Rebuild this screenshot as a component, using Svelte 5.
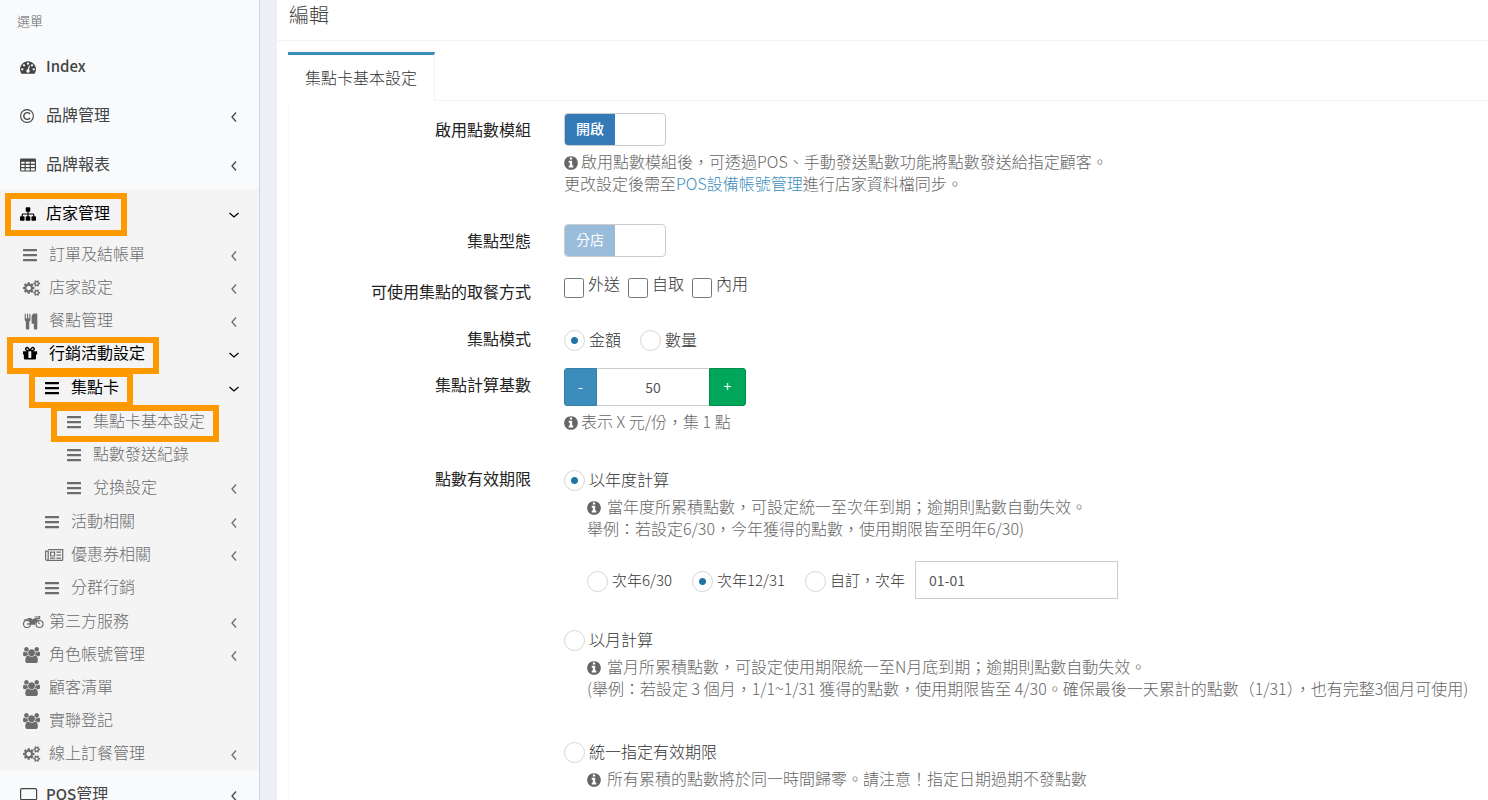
<script>
	const menu = [
		{ icon: 'dashboard', label: 'Index' },
		{ icon: 'copyright', label: '品牌管理', arrow: true },
		{ icon: 'table', label: '品牌報表', arrow: true },
		{
			icon: 'sitemap', label: '店家管理', arrow: true, open: true, marked: true,
			children: [
				{ icon: 'bars', label: '訂單及結帳單', arrow: true },
				{ icon: 'cogs', label: '店家設定', arrow: true },
				{ icon: 'cutlery', label: '餐點管理', arrow: true },
				{
					icon: 'gift', label: '行銷活動設定', arrow: true, open: true, marked: true,
					children: [
						{
							icon: 'bars', label: '集點卡', arrow: true, open: true, marked: true,
							children: [
								{ icon: 'bars', label: '集點卡基本設定', marked: true },
								{ icon: 'bars', label: '點數發送紀錄' },
								{ icon: 'bars', label: '兌換設定', arrow: true }
							]
						},
						{ icon: 'bars', label: '活動相關', arrow: true },
						{ icon: 'newspaper', label: '優惠券相關', arrow: true },
						{ icon: 'bars', label: '分群行銷' }
					]
				},
				{ icon: 'motorcycle', label: '第三方服務', arrow: true },
				{ icon: 'users', label: '角色帳號管理', arrow: true },
				{ icon: 'users', label: '顧客清單' },
				{ icon: 'users', label: '實聯登記' },
				{ icon: 'cogs', label: '線上訂餐管理', arrow: true }
			]
		},
		{ icon: 'desktop', label: 'POS管理', arrow: true }
	];

	const pickups = ['外送', '自取', '內用'];

	let enabled = $state(true);
	let mode = $state('amount');
	let base = $state(50);
	let expiry = $state('year');
	let yearEnd = $state('12/31');
	let customDate = $state('01-01');

	const smallCog = 'v140q0 16-149 31-12 27-30 52 51 113 51 138 0 4-4 7-122 71-124 71-8 0-46-47t-52-68q-20 2-30 2t-30-2q-14 21-52 68t-46 47q-2 0-124-71-4-3-4-7 0-25 51-138-18-25-30-52-149-15-149-31v-140q0-16 149-31 13-29 30-52-51-113-51-138 0-4 4-7 4-2 35-20t59-34 30-16q8 0 46 46.5t52 67.5q20-2 30-2t30 2q51-71 92-112l6-2q4 0 124 70 4 3 4 7 0 25-51 138 17 23 30 52 149 15 149 31z';

	// filled icons, drawn on a 1792 unit em
	const icons = {
		dashboard: 'M384 1152q0-53-37.5-90.5t-90.5-37.5-90.5 37.5-37.5 90.5 37.5 90.5 90.5 37.5 90.5-37.5 37.5-90.5zm192-448q0-53-37.5-90.5t-90.5-37.5-90.5 37.5-37.5 90.5 37.5 90.5 90.5 37.5 90.5-37.5 37.5-90.5zm428 481l101-382q6-26-7.5-48.5t-38.5-29.5-48 6.5-30 39.5l-101 382q-60 5-107 43.5t-63 98.5q-20 77 20 146t117 89 146-20 89-117q16-60-6-117t-72-91zm660-33q0-53-37.5-90.5t-90.5-37.5-90.5 37.5-37.5 90.5 37.5 90.5 90.5 37.5 90.5-37.5 37.5-90.5zm-640-640q0-53-37.5-90.5t-90.5-37.5-90.5 37.5-37.5 90.5 37.5 90.5 90.5 37.5 90.5-37.5 37.5-90.5zm448 192q0-53-37.5-90.5t-90.5-37.5-90.5 37.5-37.5 90.5 37.5 90.5 90.5 37.5 90.5-37.5 37.5-90.5zm320 448q0 261-141 483-19 29-54 29h-1402q-35 0-54-29-141-221-141-483 0-182 71-348t191-286 286-191 348-71 348 71 286 191 191 286 71 348z',
		sitemap: 'M1792 1248v320q0 40-28 68t-68 28h-320q-40 0-68-28t-28-68v-320q0-40 28-68t68-28h96v-192h-512v192h96q40 0 68 28t28 68v320q0 40-28 68t-68 28h-320q-40 0-68-28t-28-68v-320q0-40 28-68t68-28h96v-192h-512v192h96q40 0 68 28t28 68v320q0 40-28 68t-68 28h-320q-40 0-68-28t-28-68v-320q0-40 28-68t68-28h96v-192q0-52 38-90t90-38h512v-192h-96q-40 0-68-28t-28-68v-320q0-40 28-68t68-28h320q40 0 68 28t28 68v320q0 40-28 68t-68 28h-96v192h512q52 0 90 38t38 90v192h96q40 0 68 28t28 68z',
		bars: 'M48 210h1472q48 0 48 48v160q0 48-48 48H48q-48 0-48-48v-160q0-48 48-48zM48 770h1472q48 0 48 48v160q0 48-48 48H48q-48 0-48-48v-160q0-48 48-48zM48 1330h1472q48 0 48 48v160q0 48-48 48H48q-48 0-48-48v-160q0-48 48-48z',
		table: 'M160 160h1472q160 0 160 160v1152q0 160-160 160H160q-160 0-160-160V320q0-160 160-160zM128 544v224h384V544zm512 0v224h448V544zm576 0v224h448V544zM128 896v224h384V896zm512 0v224h448V896zm576 0v224h448V896zM128 1248v256h384v-256zm512 0v256h448v-256zm576 0v256h448v-256z',
		cogs: 'M896 896q0-106-75-181t-181-75-181 75-75 181 75 181 181 75 181-75 75-181zm768 512q0-52-38-90t-90-38-90 38-38 90q0 53 37.5 90.5t90.5 37.5 90.5-37.5 37.5-90.5zm0-1024q0-52-38-90t-90-38-90 38-38 90q0 53 37.5 90.5t90.5 37.5 90.5-37.5 37.5-90.5zm-384 421v185q0 10-7 19.5t-16 10.5l-155 24q-11 35-32 76 34 48 90 115 7 11 7 20 0 12-7 19-23 30-82.5 89.5t-78.5 59.5q-11 0-21-7l-115-90q-37 19-77 31-11 108-23 155-7 24-30 24h-186q-11 0-20-7.5t-10-17.5l-23-153q-34-10-75-31l-118 89q-7 7-20 7-11 0-21-8-144-133-144-160 0-9 7-19 10-14 41-53t47-61q-23-44-35-82l-152-24q-10-1-17-9.5t-7-19.5v-185q0-10 7-19.5t16-10.5l155-24q11-35 32-76-34-48-90-115-7-11-7-20 0-12 7-20 22-30 82-89t79-59q11 0 21 7l115 90q34-18 77-32 11-108 23-154 7-24 30-24h186q11 0 20 7.5t10 17.5l23 153q34 10 75 31l118-89q8-7 20-7 11 0 21 8 144 133 144 160 0 8-7 19-12 16-42 54t-45 60q23 48 34 82l152 23q10 2 17 10.5t7 19.5zM1920 1338' + smallCog + 'M1920 314' + smallCog,
		cutlery: 'M832 128v640q0 61-35.5 111t-92.5 70v779q0 52-38 90t-90 38h-128q-52 0-90-38t-38-90v-779q-57-20-92.5-70t-35.5-111v-640q0-26 19-45t45-19 45 19 19 45v416q0 26 19 45t45 19 45-19 19-45v-416q0-26 19-45t45-19 45 19 19 45v416q0 26 19 45t45 19 45-19 19-45v-416q0-26 19-45t45-19 45 19 19 45zm768 0v1600q0 52-38 90t-90 38h-128q-52 0-90-38t-38-90v-512h-224q-13 0-22.5-9.5t-9.5-22.5v-800q0-132 94-226t226-94h256q26 0 45 19t19 45z',
		gift: 'M0 608q0-32 32-32h440q-110 0-183-68t-73-172 73-172 183-68q110 0 180 88l128 165 128-165q70-88 180-88t183 68 73 172-73 172-183 68h468q32 0 32 32v320q0 32-32 32h-96v416q0 128-96 128H192q-96 0-96-128V960H32q-32 0-32-32zM472 432h180L530 277q-24-29-58-29-40 0-66 26t-26 66 26 66 66 26zM908 432h180q40 0 66-26t26-66-26-66-66-26q-34 0-58 29zM608 576v704q0 64 64 64h192q64 0 64-64V576z',
		users: 'M593 896q-162 5-265 128h-134q-82 0-138-40.5t-56-118.5q0-353 124-353 6 0 43.5 21t97.5 42.5 119 21.5q67 0 133-23-5 37-5 66 0 139 81 256zm1071 637q0 120-73 189.5t-194 69.5h-874q-121 0-194-69.5t-73-189.5q0-53 3.5-103.5t14-109 26.5-108.5 43-97.5 62-81 85.5-53.5 111.5-20q10 0 43 21.5t73 48 107 48 135 21.5 135-21.5 107-48 73-48 43-21.5q61 0 111.5 20t85.5 53.5 62 81 43 97.5 26.5 108.5 14 109 3.5 103.5zm-1024-1277q0 106-75 181t-181 75-181-75-75-181 75-181 181-75 181 75 75 181zm704 384q0 159-112.5 271.5t-271.5 112.5-271.5-112.5-112.5-271.5 112.5-271.5 271.5-112.5 271.5 112.5 112.5 271.5zm576 225q0 78-56 118.5t-138 40.5h-134q-103-123-265-128 81-117 81-256 0-29-5-66 66 23 133 23 59 0 119-21.5t97.5-42.5 43.5-21q124 0 124 353zm-128-609q0 106-75 181t-181 75-181-75-75-181 75-181 181-75 181 75 75 181z',
		info: 'M1152 1376v-160q0-14-9-23t-23-9h-96v-512q0-14-9-23t-23-9h-320q-14 0-23 9t-9 23v160q0 14 9 23t23 9h96v320h-96q-14 0-23 9t-9 23v160q0 14 9 23t23 9h448q14 0 23-9t9-23zm-128-896v-160q0-14-9-23t-23-9h-192q-14 0-23 9t-9 23v160q0 14 9 23t23 9h192q14 0 23-9t9-23zm640 416q0 209-103 385.5t-279.5 279.5-385.5 103-385.5-103-279.5-279.5-103-385.5 103-385.5 279.5-279.5 385.5-103 385.5 103 279.5 279.5 103 385.5z'
	};

	// latin words are set bolder than the characters around them
	const words = (label) => label.split(/([A-Za-z]+)/).filter(Boolean);
</script>

{#snippet icon(name)}
	{#if name === 'copyright'}
		<svg class="icon" viewBox="0 0 16 16" fill="none" stroke="currentColor">
			<circle cx="7" cy="8" r="6.4" stroke-width="1.1" />
			<path d="M10 6.1A3.4 3.4 0 1 0 10 9.9" stroke-width="1.4" />
		</svg>
	{:else if name === 'newspaper'}
		<svg class="icon" viewBox="0 0 16 16" fill="none" stroke="currentColor">
			<path d="M3.2 2.6H17.7V12.4Q17.7 13.4 16.7 13.4H2Q.6 13.4 .6 12V4.2H3.2V12Q3.2 13.4 2 13.4" stroke-width="1.2" />
			<path d="M5.6 5.2H9.6V9H5.6ZM5 11.2H10.2M11.4 5.2H16M11.4 8.2H16M11.4 11.2H16" stroke-width="1.2" />
		</svg>
	{:else if name === 'motorcycle'}
		<svg class="icon" viewBox="0 0 16 16" fill="none" stroke="currentColor">
			<circle cx="4" cy="10" r="3.5" stroke-width="1.2" />
			<circle cx="16.5" cy="10" r="3.5" stroke-width="1.2" />
			<path d="M1 6.2Q4 4.8 6.8 7.2L8 10.4M13 4.2L16.5 10M11.5 3H13.6L16.6 2.6V4.6H13.4" stroke-width="1.2" />
			<path d="M4 4H8L9.4 5.4Q11 4 13.2 4.4L14.6 6.4Q12.2 7.6 12 10.8H8.4Q8 7.2 5.8 6Z" fill="currentColor" stroke="none" />
			<path d="M4 10H8.4" stroke-width="1.4" />
		</svg>
	{:else if name === 'desktop'}
		<svg class="icon" viewBox="0 0 16 16" fill="none" stroke="currentColor" stroke-width="1.2">
			<rect x=".6" y="1.6" width="16" height="11" rx="1.2" />
			<path d="M6.6 12.8V15.2M10.6 12.8V15.2M5 15.4H12.2" />
		</svg>
	{:else}
		<svg class="icon" viewBox="0 0 1792 1792" fill="currentColor" fill-rule="evenodd"><path d={icons[name]} /></svg>
	{/if}
{/snippet}

{#snippet items(list, level)}
	<ul class="level-{level}">
		{#each list as item}
			<li class:open={item.open}>
				<a href="#menu">
					<span class="label" class:marked={item.marked}>
						<span class="slot">{@render icon(item.icon)}</span>
						<span class="text">{#each words(item.label) as word}{#if /[A-Z]/.test(word)}<b>{word}</b>{:else}{word}{/if}{/each}</span>
					</span>
					{#if item.arrow}
						<svg class="arrow" class:down={item.open} viewBox="0 0 10 10" width="10" height="10">
							<path d="M7 .5L3 5L7 9.5" fill="none" stroke="currentColor" stroke-width="1.3" />
						</svg>
					{/if}
				</a>
				{#if item.children}
					{@render items(item.children, level + 1)}
				{/if}
			</li>
		{/each}
	</ul>
{/snippet}

<div class="page">
	<nav class="sidebar">
		<div class="menu-header">選單</div>
		{@render items(menu, 1)}
	</nav>

	<main>
		<h1>編輯</h1>
		<div class="tabs">
			<button class="tab">集點卡基本設定</button>
		</div>

		<form>
			<div class="row">
				<label class="name" for="enabled">啟用點數模組</label>
				<div>
					<button id="enabled" type="button" role="switch" aria-checked={enabled} class="switch" onclick={() => (enabled = !enabled)}>
						<span>開啟</span>
					</button>
					<p class="help">
						<span class="info">{@render icon('info')}</span>啟用點數模組後，可透過POS、手動發送點數功能將點數發送給指定顧客。<br />
						更改設定後需至<a href="#pos">POS設備帳號管理</a>進行店家資料檔同步。
					</p>
				</div>
			</div>

			<div class="row">
				<label class="name" for="kind">集點型態</label>
				<div class="switch-line">
					<button id="kind" type="button" role="switch" aria-checked="true" class="switch" disabled><span>分店</span></button>
				</div>
			</div>

			<div class="row">
				<span class="name">可使用集點的取餐方式</span>
				<div class="checks">
					{#each pickups as pickup}
						<label><input type="checkbox" />{pickup}</label>
					{/each}
				</div>
			</div>

			<div class="row">
				<span class="name">集點模式</span>
				<div class="radios mode">
					<label><input type="radio" name="mode" value="amount" bind:group={mode} />金額</label>
					<label><input type="radio" name="mode" value="count" bind:group={mode} />數量</label>
				</div>
			</div>

			<div class="row">
				<label class="name" for="base">集點計算基數</label>
				<div>
					<div class="spinner">
						<button type="button" class="minus" onclick={() => base--}>-</button>
						<input id="base" type="text" bind:value={base} />
						<button type="button" class="plus" onclick={() => base++}>+</button>
					</div>
					<p class="help"><span class="info">{@render icon('info')}</span>表示 X 元/份，集 1 點</p>
				</div>
			</div>

			<div class="row">
				<span class="name">點數有效期限</span>
				<div class="expiry">
					<div class="radios">
						<label><input type="radio" name="expiry" value="year" bind:group={expiry} />以年度計算</label>
					</div>
					<div class="detail">
						<p class="help">
							<span class="info wide">{@render icon('info')}</span>當年度所累積點數，可設定統一至次年到期；逾期則點數自動失效。<br />
							舉例：若設定6/30，今年獲得的點數，使用期限皆至明年6/30)
						</p>
						<div class="radios dates">
							<label><input type="radio" name="year-end" value="6/30" bind:group={yearEnd} />次年6/30</label>
							<label><input type="radio" name="year-end" value="12/31" bind:group={yearEnd} />次年12/31</label>
							<label><input type="radio" name="year-end" value="custom" bind:group={yearEnd} />自訂，次年</label>
							<input class="date" type="text" aria-label="自訂，次年" bind:value={customDate} />
						</div>
					</div>

					<div class="radios">
						<label><input type="radio" name="expiry" value="month" bind:group={expiry} />以月計算</label>
					</div>
					<div class="detail">
						<p class="help">
							<span class="info wide">{@render icon('info')}</span>當月所累積點數，可設定使用期限統一至N月底到期；逾期則點數自動失效。<br />
							(舉例：若設定 3 個月，1/1~1/31 獲得的點數，使用期限皆至 4/30。確保最後一天累計的點數（1/31），也有完整3個月可使用)
						</p>
					</div>

					<div class="radios">
						<label><input type="radio" name="expiry" value="fixed" bind:group={expiry} />統一指定有效期限</label>
					</div>
					<div class="detail">
						<p class="help">
							<span class="info wide">{@render icon('info')}</span>所有累積的點數將於同一時間歸零。請注意！指定日期過期不發點數
						</p>
					</div>
				</div>
			</div>
		</form>
	</main>
</div>

<style>
	:global(body) {
		overflow: hidden;
	}

	.page {
		display: flex;
		height: 100vh;
		overflow: hidden;
		background: #ecf0f5;
		color: #333;
		font: 300 16px/22px "Noto Sans CJK TC", sans-serif;
	}

	.page :is(button, input) {
		font: inherit;
	}

	.icon {
		display: block;
		width: 16px;
		height: 16px;
		overflow: visible;
	}

	.sidebar {
		box-sizing: border-box;
		flex: none;
		width: 260px;
		border-right: 1px solid #d2d6de;
		background: #f9fafc;
	}

	.menu-header {
		height: 42px;
		padding-left: 17px;
		box-sizing: border-box;
		color: #666;
		font-size: 13px;
		line-height: 42px;
	}

	ul {
		margin: 0;
		padding: 0;
		list-style: none;
	}

	li a {
		display: flex;
		align-items: stretch;
		height: 33px;
		padding-right: 20px;
		justify-content: space-between;
		color: #6c6c6c;
		text-decoration: none;
	}

	.level-1 > li > a {
		height: 49px;
		padding-left: 20px;
		color: #444;
		font-weight: 400;
	}

	.level-1 > .open {
		background: #f4f4f5;
	}

	.level-2 > li > a {
		padding-left: 23px;
	}

	.level-3 > li > a {
		padding-left: 45px;
	}

	.level-4 > li > a {
		padding-left: 67px;
	}

	.level-3,
	.level-4 {
		padding: 1px 0;
	}

	.page .open > a {
		color: #000;
		font-weight: 400;
	}

	.label {
		position: relative;
		display: flex;
		align-items: center;
		padding-top: 1px;
	}

	.slot {
		width: 26px;
	}

	.text {
		padding-bottom: 4px;
	}

	.text b {
		font-size: 15px;
		font-weight: 500;
	}

	.marked::after {
		content: "";
		position: absolute;
		inset: 0 -14px -4px -16px;
		border: 6px solid #ff9900;
	}

	.level-1 > li > a > .marked::after {
		inset: 4px -17px 2px -15px;
	}

	.arrow {
		align-self: center;
		margin-top: 3px;
	}

	.down {
		transform: rotate(-90deg);
	}

	main {
		flex: 1;
		min-width: 0;
		margin-left: 17px;
		background: #fff;
	}

	h1 {
		height: 40px;
		margin: 0;
		padding-left: 12px;
		border-bottom: 1px solid #f4f4f4;
		color: #444;
		font-size: 20px;
		font-weight: 300;
		line-height: 30px;
	}

	.tabs {
		display: flex;
		margin: 11px 0 0 11px;
		border-bottom: 1px solid #f4f4f4;
	}

	.tab {
		height: 49px;
		margin-bottom: -1px;
		padding: 0 17px 3px;
		border: 0;
		border-top: 3px solid #3c8dbc;
		border-right: 1px solid #f4f4f4;
		background: #fff;
		color: #333;
	}

	form {
		display: flex;
		flex-direction: column;
		gap: 15px;
		margin-left: 11px;
		padding-top: 12px;
		border-left: 1px solid #f9f9f9;
	}

	.row {
		display: grid;
		grid-template-columns: 242px minmax(0, 1fr);
		column-gap: 33px;
	}

	.name {
		padding-top: 5px;
		color: #222;
		font-weight: 400;
		text-align: right;
	}

	.help {
		margin: 4px 0 15px;
		color: #666;
		white-space: nowrap;
	}

	.help a {
		color: #3c8dbc;
		text-decoration: none;
	}

	.info {
		display: inline-block;
		width: 17px;
		vertical-align: -3px;
	}

	.info .icon {
		margin-left: -1px;
	}

	.wide {
		width: 20px;
	}

	.switch {
		display: block;
		box-sizing: border-box;
		width: 102px;
		height: 33px;
		padding: 0;
		border: 1px solid #ccc;
		border-radius: 4px;
		background: #fff;
		overflow: hidden;
	}

	.page .switch span {
		display: block;
		width: 50px;
		height: 31px;
		background: #337ab7;
		color: #fff;
		font-size: 14px;
		font-weight: 500;
		line-height: 29px;
	}

	.page .switch:disabled span {
		background: #99bcdb;
		font-weight: 400;
	}

	.switch-line {
		height: 36px;
	}

	.checks {
		display: flex;
		gap: 8px;
		height: 32px;
	}

	.checks label,
	.radios label {
		display: flex;
		gap: 4px;
	}

	.checks label {
		line-height: 16px;
	}

	.checks input {
		width: 20px;
		height: 20px;
		margin: 3px 0 0;
	}

	.radios {
		display: flex;
		align-items: center;
		height: 22px;
	}

	.radios label {
		align-items: center;
		line-height: 20px;
	}

	.radios input[type="radio"] {
		appearance: none;
		box-sizing: border-box;
		width: 21px;
		height: 21px;
		margin: 3px 0 0;
		border: 1px solid #d5d5d5;
		border-radius: 50%;
		background: #fff;
	}

	.radios input[type="radio"]:checked {
		background: radial-gradient(circle, #1f74a5 3px, #fff 4px);
	}

	.mode {
		gap: 19px;
		padding: 6px 0 3px;
	}

	.spinner {
		display: flex;
		height: 38px;
	}

	.spinner button {
		width: 33px;
		padding: 0 0 3px;
		border: 1px solid #367fa9;
		border-radius: 3px 0 0 3px;
		background: #3c8dbc;
		color: #fff;
		font-size: 14px;
		font-weight: 400;
	}

	.spinner .plus {
		width: 37px;
		border-color: #008d4c;
		border-radius: 0 3px 3px 0;
		background: #00a65a;
	}

	.page .spinner input,
	.page .date {
		box-sizing: border-box;
		width: 112px;
		border: 1px solid #ccc;
		border-width: 1px 0;
		color: #555;
		font-size: 14px;
		font-weight: 400;
		text-align: center;
	}

	.page .date {
		width: 203px;
		height: 38px;
		padding: 0 13px;
		border-width: 1px;
		text-align: left;
	}

	.expiry {
		padding-top: 6px;
	}

	.detail {
		padding: 1px 0 26px 23px;
	}

	.dates {
		height: 38px;
		margin: 22px 0 3px;
		font-size: 15px;
	}

	.dates label {
		margin-right: 20px;
	}

	.dates label:last-of-type {
		margin-right: 10px;
	}
</style>
